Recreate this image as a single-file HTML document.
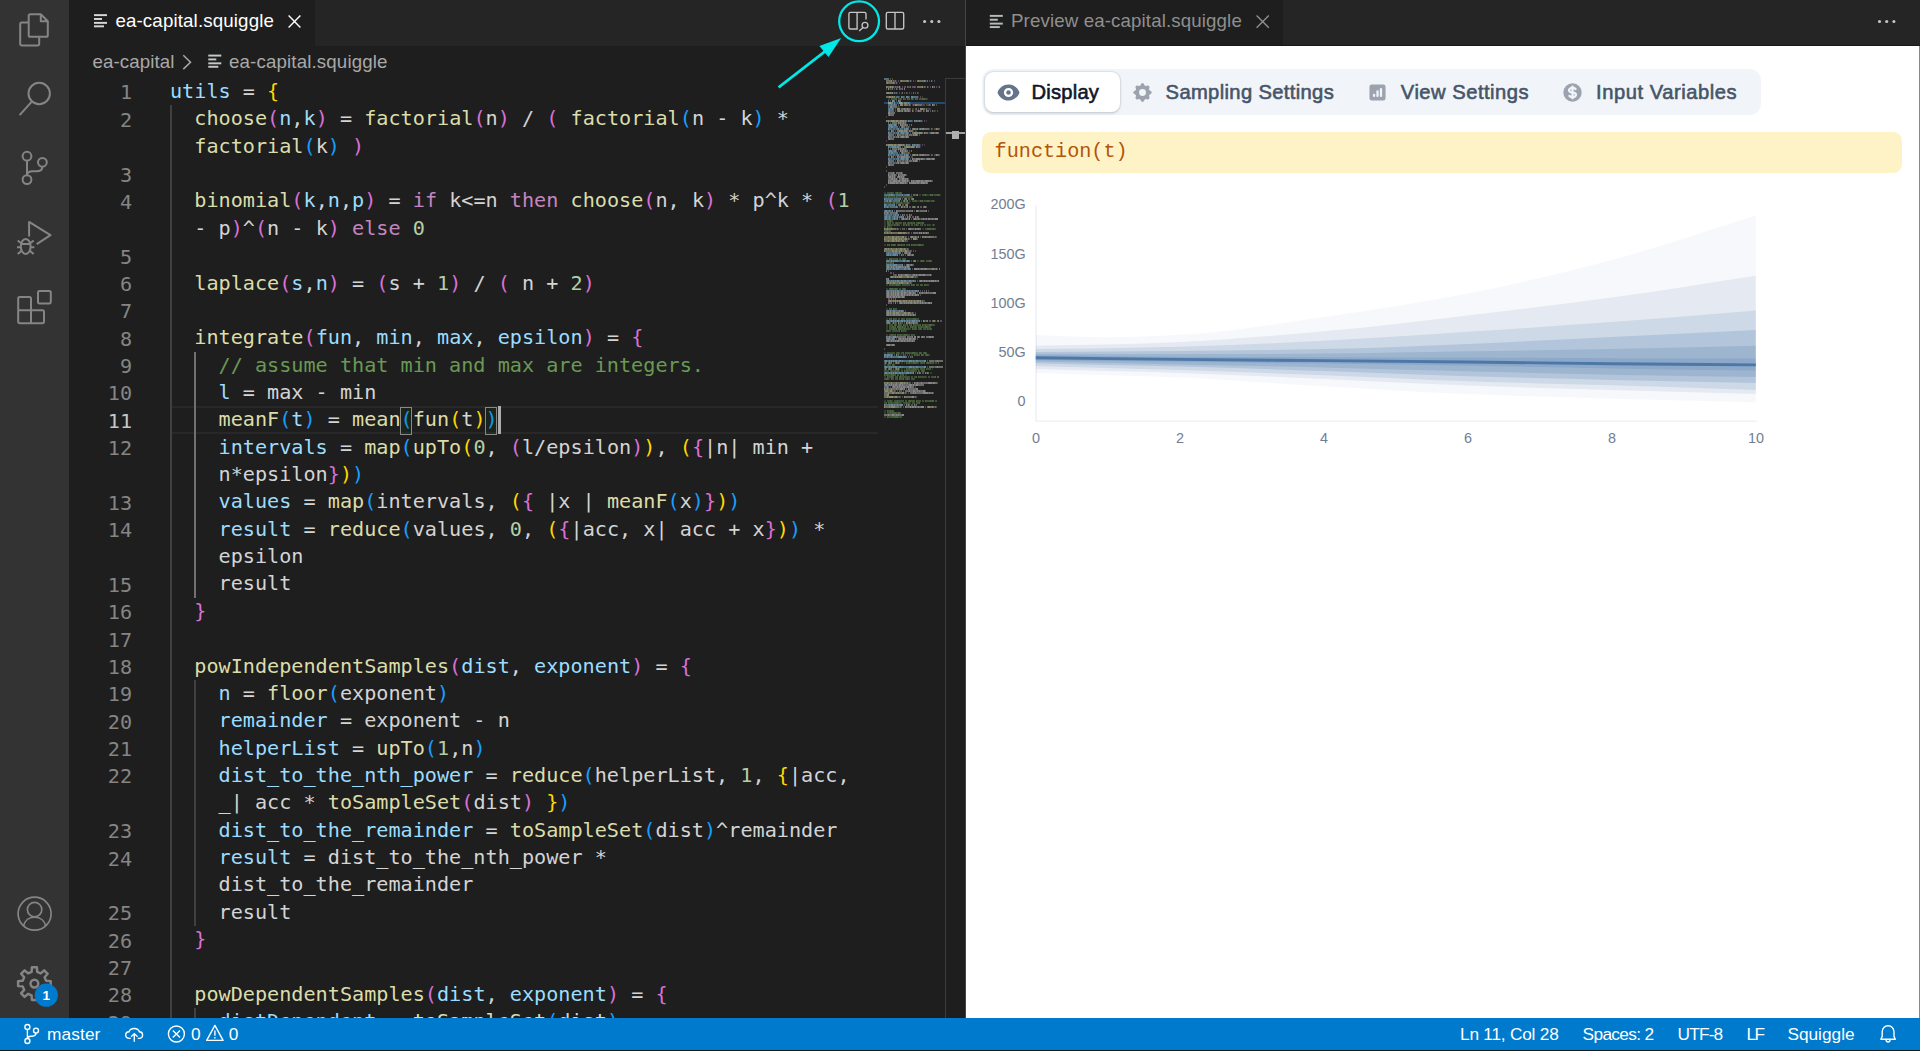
<!DOCTYPE html>
<html lang="en"><head><meta charset="utf-8"><title>ea-capital.squiggle - Visual Studio Code</title>
<style>
html,body{margin:0;padding:0}
body{width:1920px;height:1051px;overflow:hidden;position:relative;background:#1e1e1e;font-family:"Liberation Sans","DejaVu Sans",sans-serif;color:#ccc}
.abs{position:absolute}
div,span{box-sizing:border-box}
/* activity bar */
#act{position:absolute;left:0;top:0;width:69.1px;height:1018px;background:#333333}
/* editor group 1 */
#tabs1{position:absolute;left:69.1px;top:0;width:896.4px;height:46px;background:#252526}
#tab1{position:absolute;left:0;top:0;width:245.8px;height:46px;background:#1e1e1e}
.tablabel{position:absolute;font-size:18.72px;line-height:24px;white-space:nowrap}
#crumbs{position:absolute;left:69.1px;top:46px;width:896.4px;height:31.5px;background:#1e1e1e}
.crumb{position:absolute;font-size:18.72px;line-height:24px;white-space:nowrap;color:#a9a9a9}
/* code */
#ed{position:absolute;left:69.1px;top:0;width:896.4px;height:1018px;overflow:hidden;pointer-events:none}
.row,.ln{position:absolute;font-family:"DejaVu Sans Mono","Liberation Mono",monospace;font-size:20.16px;line-height:27.36px;height:27.36px;white-space:pre}
.row{left:100.9px;color:#d4d4d4}
.ln{left:0;width:63px;text-align:right;color:#858585}
.ln.cur{color:#c6c6c6}
.v{color:#9CDCFE}.f{color:#DCDCAA}.d{color:#D4D4D4}.k{color:#C586C0}.n{color:#B5CEA8}.c{color:#6A9955}
.b1{color:#FFD700}.b2{color:#DA70D6}.b3{color:#179FFF}
.bm{position:relative}.bm::before{content:"";position:absolute;left:-1px;top:0;width:12.1px;height:27.36px;border:1.3px solid #888;background:rgba(0,100,0,.1);box-sizing:border-box}
.cursor{display:inline-block;width:2.7px;height:27.36px;background:#aeafad;vertical-align:top;margin-left:.4px}
.guide{position:absolute;width:1.44px;background:#404040}
.guide.act{background:#707070}
#curline{position:absolute;left:171.5px;width:706px;height:27.36px;border-top:2.88px solid #282828;border-bottom:2.88px solid #282828}
/* overview ruler */
#ruler{position:absolute;left:945.2px;top:78.2px;width:20.2px;height:940px;border-left:1.2px solid #3c3c3c;border-top:1.2px solid #3c3c3c}
/* group 2 */
#sep{position:absolute;left:965.2px;top:0;width:1.2px;height:1018px;background:#444}
#tabs2{position:absolute;left:966.3px;top:0;width:953.7px;height:46.4px;background:#252526;border-bottom:1.2px solid #181818}
#tab2{position:absolute;left:0;top:0;width:316.6px;height:45.2px;background:#1e1e1e}
#web{position:absolute;left:966.3px;top:46.4px;width:953.7px;height:971.6px;background:#fff}
#pills{position:absolute;left:982.2px;top:68.8px;width:778.4px;height:45.8px;border-radius:11.5px;background:#f1f5f9}
#pill1{position:absolute;left:984.9px;top:71.6px;width:135.2px;height:40.3px;border-radius:8.6px;background:#fff;box-shadow:0 1.4px 3px rgba(0,0,0,.09),0 0 0 1.3px rgba(203,213,225,.5)}
.pl{position:absolute;top:80px;font-size:20.16px;line-height:24px;white-space:nowrap;color:#475569;-webkit-text-stroke:0.6px #475569}
#banner{position:absolute;left:982.2px;top:132.3px;width:920px;height:40.5px;border-radius:8.6px;background:#fef3c7}
#fn{position:absolute;left:994.6px;top:139.5px;font-family:"Liberation Mono",monospace;font-size:20.16px;line-height:24px;color:#b45309;white-space:pre}
/* status */
#status{position:absolute;left:0;top:1017.8px;width:1920px;height:32.1px;background:#007acc}
#botline{position:absolute;left:0;top:1049.8px;width:1920px;height:1.2px;background:#1a1a1a}
#redge{position:absolute;left:1918.9px;top:46.4px;width:1.1px;height:972px;background:#8a8a8a}
.st{position:absolute;top:1022.6px;font-size:17.28px;line-height:22px;color:#fff;white-space:nowrap}

</style></head>
<body>
<div id="act"></div>
<svg class="abs" style="left:0;top:0" width="69" height="1018" viewBox="0 0 69 1018"><path fill="none" stroke="#858585" stroke-width="2" stroke-linejoin="round" stroke-linecap="butt" d="M40.8,14.3H30.3a1.6,1.6 0 0 0 -1.6,1.6V35.2a1.6,1.6 0 0 0 1.6,1.6H46.2a1.6,1.6 0 0 0 1.6,-1.6V21.3ZM40.8,14.3V21.3H47.8"/><path fill="none" stroke="#858585" stroke-width="2" stroke-linejoin="round" stroke-linecap="butt" d="M28.2,22.6H21.8a1.6,1.6 0 0 0 -1.6,1.6V44a1.6,1.6 0 0 0 1.6,1.6H37.6a1.6,1.6 0 0 0 1.6,-1.6V37.2"/><circle fill="none" stroke="#858585" stroke-width="2" stroke-linejoin="round" stroke-linecap="butt" cx="39.2" cy="93.5" r="10.7"/><path fill="none" stroke="#858585" stroke-width="2" stroke-linejoin="round" stroke-linecap="butt" d="M31.8,101.6L19.6,115.2"/><circle fill="none" stroke="#858585" stroke-width="2" stroke-linejoin="round" stroke-linecap="butt" cx="27" cy="156.2" r="4.4"/><circle fill="none" stroke="#858585" stroke-width="2" stroke-linejoin="round" stroke-linecap="butt" cx="27" cy="179.6" r="4.4"/><circle fill="none" stroke="#858585" stroke-width="2" stroke-linejoin="round" stroke-linecap="butt" cx="42.4" cy="162.3" r="4.4"/><path fill="none" stroke="#858585" stroke-width="2" stroke-linejoin="round" stroke-linecap="butt" d="M27,160.6V175.2M42.4,166.7C42.4,170.4 39.5,171.3 36.5,171.3H33C29.5,171.3 27,172.6 27,175.2"/><path fill="none" stroke="#858585" stroke-width="2" stroke-linejoin="round" stroke-linecap="butt" stroke-linejoin="miter" d="M29.1,236.4V221.9L50.5,235.2L36.7,244.2"/><ellipse fill="none" stroke="#858585" stroke-width="2" stroke-linejoin="round" stroke-linecap="butt" cx="25.7" cy="246.4" rx="4.9" ry="7.5"/><path fill="none" stroke="#858585" stroke-width="2" stroke-linejoin="round" stroke-linecap="butt" stroke-width="1.8" d="M21.3,243.9H30.1M21.2,243.2L17.7,240.5M20.6,247.3H17M21.3,250.9L17.7,254.1M30.2,243.2L33.7,240.5M30.8,247.3H34.4M30.1,250.9L33.7,254.1"/><path fill="none" stroke="#858585" stroke-width="2" stroke-linejoin="round" stroke-linecap="butt" d="M31,310.2V298.6a1.6,1.6 0 0 0 -1.6,-1.6H19.8a1.6,1.6 0 0 0 -1.6,1.6V321.6a1.6,1.6 0 0 0 1.6,1.6H42.4a1.6,1.6 0 0 0 1.6,-1.6V311.8a1.6,1.6 0 0 0 -1.6,-1.6H18.2M31,310.2V323.2"/><rect fill="none" stroke="#858585" stroke-width="2" stroke-linejoin="round" stroke-linecap="butt" x="38" y="291" width="12.8" height="12.4" rx="1.6"/><circle fill="none" stroke="#858585" stroke-width="1.7" cx="34.6" cy="913.7" r="16.5"/><circle fill="none" stroke="#858585" stroke-width="1.7" cx="34.6" cy="909.6" r="7.2"/><path fill="none" stroke="#858585" stroke-width="1.7" d="M23.6,926C24.6,920.6 29,917.2 34.6,917.2C40.2,917.2 44.6,920.6 45.6,926"/><path fill="none" stroke="#858585" stroke-width="2.45" stroke-linejoin="round" d="M31.6,971.9L31.9,967.3L36.9,967.3L37.2,971.9L40.7,973.4L44.2,970.3L47.7,973.8L44.6,977.3L46.1,980.8L50.7,981.1L50.7,986.1L46.1,986.4L44.6,989.9L47.7,993.4L44.2,996.9L40.7,993.8L37.2,995.3L36.9,999.9L31.9,999.9L31.6,995.3L28.1,993.8L24.6,996.9L21.1,993.4L24.2,989.9L22.7,986.4L18.1,986.1L18.1,981.1L22.7,980.8L24.2,977.3L21.1,973.8L24.6,970.3L28.1,973.4Z"/><circle fill="none" stroke="#858585" stroke-width="2.45" cx="34.4" cy="983.6" r="3.9"/><circle cx="46.3" cy="995.2" r="11.6" fill="#007acc"/><text x="46.3" y="1000.2" text-anchor="middle" font-family="'Liberation Sans',sans-serif" font-weight="bold" font-size="13.5" fill="#fff">1</text></svg>
<div id="tabs1"><div id="tab1"></div></div>
<div id="crumbs"></div>
<div class="tablabel" style="left:115.4px;top:9.2px;color:#fff;letter-spacing:.14px">ea-capital.squiggle</div>
<div class="crumb" style="left:92.4px;top:49.6px;letter-spacing:.1px">ea-capital</div>
<div class="crumb" style="left:229px;top:49.6px;letter-spacing:.14px">ea-capital.squiggle</div>
<div id="curline" style="top:406.3px"></div>
<div id="ed">

<div class="ln" style="top:79.46px">1</div>
<div class="row" style="top:78.00px"><span class="v">utils</span><span class="d"> = </span><span class="b1">{</span></div>
<div class="ln" style="top:106.82px">2</div>
<div class="row" style="top:105.36px"><span class="d">  </span><span class="f">choose</span><span class="b2">(</span><span class="v">n</span><span class="d">,</span><span class="v">k</span><span class="b2">)</span><span class="d"> = </span><span class="f">factorial</span><span class="b2">(</span><span class="d">n</span><span class="b2">)</span><span class="d"> / </span><span class="b2">(</span><span class="d"> </span><span class="f">factorial</span><span class="b3">(</span><span class="d">n - k</span><span class="b3">)</span><span class="d"> *</span></div>
<div class="row" style="top:132.72px"><span class="d">  </span><span class="f">factorial</span><span class="b3">(</span><span class="d">k</span><span class="b3">)</span><span class="d"> </span><span class="b2">)</span></div>
<div class="ln" style="top:161.54px">3</div>
<div class="ln" style="top:188.90px">4</div>
<div class="row" style="top:187.44px"><span class="d">  </span><span class="f">binomial</span><span class="b2">(</span><span class="v">k</span><span class="d">,</span><span class="v">n</span><span class="d">,</span><span class="v">p</span><span class="b2">)</span><span class="d"> = </span><span class="k">if</span><span class="d"> k&lt;=n </span><span class="k">then</span><span class="d"> </span><span class="f">choose</span><span class="b2">(</span><span class="d">n, k</span><span class="b2">)</span><span class="d"> * p^k * </span><span class="b2">(</span><span class="n">1</span></div>
<div class="row" style="top:214.80px"><span class="d">  - p</span><span class="b2">)</span><span class="d">^</span><span class="b2">(</span><span class="d">n - k</span><span class="b2">)</span><span class="d"> </span><span class="k">else</span><span class="d"> </span><span class="n">0</span></div>
<div class="ln" style="top:243.62px">5</div>
<div class="ln" style="top:270.98px">6</div>
<div class="row" style="top:269.52px"><span class="d">  </span><span class="f">laplace</span><span class="b2">(</span><span class="v">s</span><span class="d">,</span><span class="v">n</span><span class="b2">)</span><span class="d"> = </span><span class="b2">(</span><span class="d">s + </span><span class="n">1</span><span class="b2">)</span><span class="d"> / </span><span class="b2">(</span><span class="d"> n + </span><span class="n">2</span><span class="b2">)</span></div>
<div class="ln" style="top:298.34px">7</div>
<div class="ln" style="top:325.70px">8</div>
<div class="row" style="top:324.24px"><span class="d">  </span><span class="f">integrate</span><span class="b2">(</span><span class="v">fun</span><span class="d">, </span><span class="v">min</span><span class="d">, </span><span class="v">max</span><span class="d">, </span><span class="v">epsilon</span><span class="b2">)</span><span class="d"> = </span><span class="b2">{</span></div>
<div class="ln" style="top:353.06px">9</div>
<div class="row" style="top:351.60px"><span class="d">    </span><span class="c">// assume that min and max are integers.</span></div>
<div class="ln" style="top:380.42px">10</div>
<div class="row" style="top:378.96px"><span class="d">    </span><span class="v">l</span><span class="d"> = max - min</span></div>
<div class="ln cur" style="top:407.78px">11</div>
<div class="row" style="top:406.32px"><span class="d">    </span><span class="f">meanF</span><span class="b3">(</span><span class="v">t</span><span class="b3">)</span><span class="d"> = </span><span class="f">mean</span><span class="b3 bm">(</span><span class="f">fun</span><span class="b1">(</span><span class="d">t</span><span class="b1">)</span><span class="b3 bm">)</span><span class="cursor"></span></div>
<div class="ln" style="top:435.14px">12</div>
<div class="row" style="top:433.68px"><span class="d">    </span><span class="v">intervals</span><span class="d"> = </span><span class="f">map</span><span class="b3">(</span><span class="f">upTo</span><span class="b1">(</span><span class="n">0</span><span class="d">, </span><span class="b2">(</span><span class="d">l/epsilon</span><span class="b2">)</span><span class="b1">)</span><span class="d">, </span><span class="b1">(</span><span class="b2">{</span><span class="d">|n| min +</span></div>
<div class="row" style="top:461.04px"><span class="d">    n*epsilon</span><span class="b2">}</span><span class="b1">)</span><span class="b3">)</span></div>
<div class="ln" style="top:489.86px">13</div>
<div class="row" style="top:488.40px"><span class="d">    </span><span class="v">values</span><span class="d"> = </span><span class="f">map</span><span class="b3">(</span><span class="d">intervals, </span><span class="b1">(</span><span class="b2">{</span><span class="d"> |x | </span><span class="f">meanF</span><span class="b3">(</span><span class="d">x</span><span class="b3">)</span><span class="b2">}</span><span class="b1">)</span><span class="b3">)</span></div>
<div class="ln" style="top:517.22px">14</div>
<div class="row" style="top:515.76px"><span class="d">    </span><span class="v">result</span><span class="d"> = </span><span class="f">reduce</span><span class="b3">(</span><span class="d">values, </span><span class="n">0</span><span class="d">, </span><span class="b1">(</span><span class="b2">{</span><span class="d">|acc, x| acc + x</span><span class="b2">}</span><span class="b1">)</span><span class="b3">)</span><span class="d"> *</span></div>
<div class="row" style="top:543.12px"><span class="d">    epsilon</span></div>
<div class="ln" style="top:571.94px">15</div>
<div class="row" style="top:570.48px"><span class="d">    result</span></div>
<div class="ln" style="top:599.30px">16</div>
<div class="row" style="top:597.84px"><span class="d">  </span><span class="b2">}</span></div>
<div class="ln" style="top:626.66px">17</div>
<div class="ln" style="top:654.02px">18</div>
<div class="row" style="top:652.56px"><span class="d">  </span><span class="f">powIndependentSamples</span><span class="b2">(</span><span class="v">dist</span><span class="d">, </span><span class="v">exponent</span><span class="b2">)</span><span class="d"> = </span><span class="b2">{</span></div>
<div class="ln" style="top:681.38px">19</div>
<div class="row" style="top:679.92px"><span class="d">    </span><span class="v">n</span><span class="d"> = </span><span class="f">floor</span><span class="b3">(</span><span class="d">exponent</span><span class="b3">)</span></div>
<div class="ln" style="top:708.74px">20</div>
<div class="row" style="top:707.28px"><span class="d">    </span><span class="v">remainder</span><span class="d"> = exponent - n</span></div>
<div class="ln" style="top:736.10px">21</div>
<div class="row" style="top:734.64px"><span class="d">    </span><span class="v">helperList</span><span class="d"> = </span><span class="f">upTo</span><span class="b3">(</span><span class="n">1</span><span class="d">,n</span><span class="b3">)</span></div>
<div class="ln" style="top:763.46px">22</div>
<div class="row" style="top:762.00px"><span class="d">    </span><span class="v">dist_to_the_nth_power</span><span class="d"> = </span><span class="f">reduce</span><span class="b3">(</span><span class="d">helperList, </span><span class="n">1</span><span class="d">, </span><span class="b1">{</span><span class="d">|acc,</span></div>
<div class="row" style="top:789.36px"><span class="d">    _| acc * </span><span class="f">toSampleSet</span><span class="b2">(</span><span class="d">dist</span><span class="b2">)</span><span class="d"> </span><span class="b1">}</span><span class="b3">)</span></div>
<div class="ln" style="top:818.18px">23</div>
<div class="row" style="top:816.72px"><span class="d">    </span><span class="v">dist_to_the_remainder</span><span class="d"> = </span><span class="f">toSampleSet</span><span class="b3">(</span><span class="d">dist</span><span class="b3">)</span><span class="d">^remainder</span></div>
<div class="ln" style="top:845.54px">24</div>
<div class="row" style="top:844.08px"><span class="d">    </span><span class="v">result</span><span class="d"> = dist_to_the_nth_power *</span></div>
<div class="row" style="top:871.44px"><span class="d">    dist_to_the_remainder</span></div>
<div class="ln" style="top:900.26px">25</div>
<div class="row" style="top:898.80px"><span class="d">    result</span></div>
<div class="ln" style="top:927.62px">26</div>
<div class="row" style="top:926.16px"><span class="d">  </span><span class="b2">}</span></div>
<div class="ln" style="top:954.98px">27</div>
<div class="ln" style="top:982.34px">28</div>
<div class="row" style="top:980.88px"><span class="d">  </span><span class="f">powDependentSamples</span><span class="b2">(</span><span class="v">dist</span><span class="d">, </span><span class="v">exponent</span><span class="b2">)</span><span class="d"> = </span><span class="b2">{</span></div>
<div class="ln" style="top:1009.70px">29</div>
<div class="row" style="top:1008.24px"><span class="d">    </span><span class="v">distDependent</span><span class="d"> = </span><span class="f">toSampleSet</span><span class="b3">(</span><span class="d">dist</span><span class="b3">)</span></div>
</div>
<div class="guide" style="left:170.35px;top:105.36px;height:957.60px"></div>
<div class="guide act" style="left:194.17px;top:351.60px;height:246.24px"></div>
<div class="guide" style="left:194.17px;top:679.92px;height:246.24px"></div>
<div class="guide" style="left:194.17px;top:1008.24px;height:54.72px"></div>
<svg class="abs" style="left:883.7px;top:78.2px" width="63" height="342" viewBox="0 0 63 342" shape-rendering="crispEdges">
<rect x="0" y="24" width="62" height="2" fill="#264f78" opacity="0.9"/>
<path d="M8 1h1M23 25h1M25 25h1M24 27h1M39 27h1M42 27h1M14 29h1M28 31h1M45 31h1M31 33h1M50 33h1M50 51h1M31 53h1" stroke="#FFD700" stroke-width="1.15" opacity="0.26" fill="none"/>
<path d="M8 3h1M12 3h1M25 3h1M27 3h1M31 3h1M15 5h1M10 9h1M16 9h1M39 9h1M44 9h1M54 9h1M5 11h1M7 11h1M13 11h1M9 15h1M13 15h1M17 15h1M23 15h1M27 15h1M34 15h1M11 19h1M34 19h1M38 19h1M28 27h1M38 27h1M43 27h1M13 29h1M29 31h1M44 31h1M32 33h1M49 33h1M2 39h1M23 43h1M38 43h1M42 43h1M24 53h1M29 53h1M2 63h1M21 67h1M36 67h1M40 67h1" stroke="#DA70D6" stroke-width="1.15" opacity="0.26" fill="none"/>
<path d="M42 3h1M48 3h1M11 5h1M13 5h1M9 25h1M11 25h1M19 25h1M26 25h1M19 27h1M15 29h1M16 31h1M41 31h1M43 31h1M46 31h1M19 33h1M51 33h1M13 45h1M22 45h1M21 49h1M25 49h1M34 51h1M32 53h1M39 55h1M44 55h1M31 69h1M36 69h1" stroke="#179FFF" stroke-width="1.15" opacity="0.26" fill="none"/>
<path d="M4 21h2M43 21h1M0 115h2M35 117h2M43 117h3M49 117h1M56 117h1M3 119h1M11 119h1M18 119h1M28 119h1M25 123h2M33 123h3M39 123h1M46 123h1M50 123h1M7 125h1M11 125h1M19 125h1M25 125h1M0 143h2M0 145h2M0 147h2M9 147h1M17 147h1M21 147h1M23 147h1M31 147h1M34 147h1M37 147h1M44 147h1M46 147h1M48 147h1M50 147h1M1 149h1M4 149h1M6 149h2M38 151h2M0 167h2M2 181h2M33 183h2M40 183h1M2 207h2M2 211h2M2 231h2M2 241h2M2 247h2M2 249h2M2 251h2M26 251h1M42 251h1M22 253h1M2 257h2M0 275h2M16 277h2M20 277h1M23 277h1M27 277h2M45 277h1M17 285h2M20 285h1M17 291h2M20 291h1M48 291h1M15 293h1M46 295h2M17 297h1M21 297h2M0 299h2M42 299h1M5 301h1M30 301h1M0 323h2M8 323h1M17 325h1M26 325h1M0 333h2M0 335h2M0 339h2" stroke="#6A9955" stroke-width="1.15" opacity="0.26" fill="none"/>
<path d="M8 21h3M14 21h2M17 21h1M20 21h2M24 21h1M29 21h1M32 21h1M35 21h3M41 21h2M3 115h4M8 115h2M11 115h1M14 115h2M17 115h1M38 117h3M42 117h1M50 117h3M55 117h1M0 119h2M5 119h5M13 119h5M20 119h8M28 123h3M32 123h1M40 123h3M45 123h1M47 123h2M1 125h5M8 125h1M14 125h2M18 125h1M20 125h3M4 143h2M7 143h2M5 145h1M8 145h2M11 145h1M13 145h5M20 145h1M23 145h1M25 145h2M28 145h2M32 145h2M36 145h2M3 147h1M6 147h3M11 147h2M14 147h2M20 147h1M25 147h1M27 147h2M30 147h1M33 147h1M36 147h1M40 147h2M43 147h1M45 147h1M0 149h1M5 149h1M41 151h2M47 151h1M50 151h2M0 153h1M4 153h1M6 153h1M4 167h1M8 167h1M11 167h1M13 167h1M16 167h1M18 167h2M22 167h3M28 167h2M31 167h3M37 167h3M8 181h5M15 181h2M18 181h1M21 181h1M36 183h1M42 183h3M47 183h1M3 185h3M8 185h1M6 207h2M9 207h3M15 207h2M18 207h8M28 207h1M30 207h1M32 207h3M36 207h1M38 207h1M41 207h4M9 211h2M13 211h1M15 211h2M18 211h1M21 211h1M6 231h1M10 231h3M6 241h1M10 241h3M14 241h2M17 241h1M19 241h2M23 241h2M26 241h3M32 241h3M5 247h4M12 247h1M16 247h2M20 247h3M25 247h2M30 247h6M39 247h2M42 247h3M48 247h3M5 249h3M10 249h1M17 249h1M19 249h2M23 249h2M27 249h1M29 249h2M32 249h1M35 249h2M38 249h3M44 249h3M5 251h4M11 251h1M17 251h3M21 251h5M29 251h2M32 251h1M34 251h2M37 251h1M39 251h3M44 251h2M47 251h1M2 253h1M5 253h2M8 253h7M18 253h4M5 257h2M9 257h2M14 257h2M17 257h3M23 257h3M28 257h3M3 275h8M12 275h2M15 275h1M17 275h2M22 275h2M25 275h3M31 275h3M37 275h1M39 275h1M42 275h1M21 277h1M25 277h1M31 277h2M34 277h2M39 277h1M41 277h1M44 277h1M23 285h2M26 285h3M32 285h3M36 285h1M38 285h2M42 285h1M45 285h1M47 285h2M51 285h2M0 287h2M3 287h1M5 287h2M10 287h1M23 291h2M26 291h3M32 291h3M36 291h1M38 291h2M42 291h5M0 293h5M6 293h1M8 293h3M12 293h1M17 293h2M21 293h2M24 293h3M30 293h3M35 293h1M37 293h1M40 293h1M1 297h2M4 297h3M10 297h2M14 297h1M18 297h1M4 299h3M9 299h1M11 299h2M15 299h1M17 299h9M27 299h2M30 299h2M35 299h7M44 299h2M47 299h4M0 301h2M4 301h1M8 301h2M11 301h3M16 301h3M21 301h2M24 301h2M27 301h2M3 323h3M7 323h1M10 323h3M14 323h6M21 323h2M24 323h1M27 323h2M30 323h1M33 323h4M38 323h2M42 323h4M47 323h1M51 323h2M0 325h2M5 325h2M8 325h3M14 325h3M19 325h3M23 325h3M28 325h3M32 325h3M4 333h2M7 333h1M9 333h1M3 335h3M7 335h1M12 335h2M16 335h1M4 339h4M9 339h1M14 339h4" stroke="#6A9955" stroke-width="1.15" opacity="0.42" fill="none"/>
<path d="M7 21h1M11 21h2M16 21h1M19 21h1M23 21h1M25 21h1M27 21h2M31 21h1M33 21h1M38 21h3M7 115h1M12 115h2M16 115h1M41 117h1M46 117h3M53 117h2M2 119h1M4 119h1M10 119h1M12 119h1M19 119h1M31 123h1M36 123h3M43 123h2M49 123h1M0 125h1M6 125h1M9 125h2M12 125h2M16 125h2M23 125h2M3 143h1M6 143h1M3 145h2M6 145h1M12 145h1M19 145h1M21 145h1M24 145h1M27 145h1M30 145h1M34 145h2M38 145h2M4 147h2M10 147h1M13 147h1M19 147h1M22 147h1M24 147h1M32 147h1M38 147h1M49 147h1M3 149h1M43 151h4M48 151h2M1 153h3M5 153h1M3 167h1M5 167h1M7 167h1M9 167h2M14 167h2M17 167h1M20 167h1M25 167h1M27 167h1M30 167h1M34 167h3M5 181h3M13 181h1M19 181h2M37 183h3M45 183h2M2 185h1M6 185h2M9 185h1M5 207h1M8 207h1M12 207h3M27 207h1M29 207h1M37 207h1M40 207h1M5 211h4M11 211h2M19 211h2M5 231h1M7 231h1M9 231h1M5 241h1M7 241h1M9 241h1M18 241h1M22 241h1M25 241h1M29 241h3M10 247h2M14 247h2M19 247h1M23 247h1M27 247h1M29 247h1M36 247h1M38 247h1M41 247h1M45 247h3M8 249h2M11 249h1M13 249h4M18 249h1M21 249h1M26 249h1M28 249h1M31 249h1M34 249h1M37 249h1M41 249h3M9 251h2M12 251h1M14 251h3M20 251h1M28 251h1M31 251h1M36 251h1M43 251h1M46 251h1M3 253h2M15 253h1M17 253h1M7 257h2M11 257h1M13 257h1M16 257h1M20 257h3M27 257h1M14 275h1M19 275h1M21 275h1M24 275h1M28 275h3M35 275h2M40 275h2M19 277h1M30 277h1M33 277h1M37 277h2M42 277h2M22 285h1M25 285h1M29 285h3M37 285h1M40 285h1M43 285h2M46 285h1M49 285h1M54 285h1M4 287h1M8 287h2M22 291h1M25 291h1M29 291h3M37 291h1M40 291h1M7 293h1M11 293h1M13 293h2M20 293h1M23 293h1M27 293h3M34 293h1M38 293h2M0 297h1M3 297h1M7 297h3M13 297h1M16 297h1M19 297h1M3 299h1M7 299h2M13 299h1M16 299h1M32 299h1M34 299h1M51 299h1M53 299h2M2 301h2M7 301h1M15 301h1M19 301h1M23 301h1M29 301h1M6 323h1M13 323h1M25 323h2M29 323h1M32 323h1M41 323h1M46 323h1M48 323h2M2 325h1M4 325h1M7 325h1M11 325h3M22 325h1M35 325h1M3 333h1M6 333h1M8 333h1M6 335h1M8 335h4M14 335h2M3 339h1M8 339h1M10 339h4" stroke="#6A9955" stroke-width="1.15" opacity="0.56" fill="none"/>
<path d="M6 1h1M10 3h1M14 3h1M29 3h1M45 3h1M50 3h1M12 9h1M14 9h1M18 9h1M24 9h2M41 9h1M46 9h1M49 9h1M52 9h1M2 11h1M6 11h1M10 11h1M11 15h1M15 15h1M20 15h1M25 15h1M31 15h1M15 19h1M20 19h1M25 19h1M36 19h1M6 23h1M12 23h1M13 25h1M14 27h1M26 27h1M30 27h1M40 27h1M44 27h1M46 27h1M52 27h1M5 29h1M11 31h1M26 31h1M31 31h1M34 31h1M11 33h1M26 33h1M29 33h1M33 33h1M37 33h1M40 33h1M46 33h1M53 33h1M28 43h1M40 43h1M6 45h1M14 47h1M25 47h1M15 49h1M23 49h1M26 51h1M45 51h1M48 51h1M51 51h1M55 51h1M4 53h2M11 53h1M26 55h1M45 55h1M11 57h1M17 57h1M20 57h1M24 57h1M28 57h1M35 57h1M8 59h1M11 59h1M15 59h1M26 67h1M38 67h1M18 69h1M6 71h1M13 71h1M22 71h1M14 73h1M25 73h1M15 75h1M21 75h1M23 75h1M25 75h1M26 77h1M34 77h1M45 77h1M48 77h1M50 77h2M55 77h1M4 79h2M11 79h1M27 79h2M26 81h1M41 81h1M11 83h1M17 83h1M20 83h1M24 83h1M28 83h1M35 83h1M8 85h1M11 85h1M15 85h1M2 89h1M2 93h1M10 95h1M18 95h1M12 97h1M22 97h1M11 99h1M20 99h1M13 101h1M24 101h1M25 103h1M48 103h1M23 105h1M2 107h1M0 109h1M27 117h1M18 121h1M17 123h1M12 127h1M15 129h1M19 129h1M31 129h1M42 129h1M10 133h1M21 133h1M30 133h1M35 133h1M44 133h1M5 135h1M16 137h1M21 139h1M15 141h1M24 141h1M27 141h1M36 141h1M43 141h1M12 151h1M14 151h1M16 151h1M22 151h1M30 151h1M23 155h1M25 155h1M27 155h1M34 155h1M38 155h1M20 159h1M22 159h1M24 159h1M33 159h1M36 159h1M50 159h1M52 159h1M23 161h1M25 161h1M27 161h1M33 161h1M20 163h1M22 163h2M22 171h1M24 171h1M25 173h1M27 173h1M29 173h1M31 173h1M18 175h1M15 177h1M21 177h1M27 183h1M20 187h1M29 187h1M28 191h1M53 191h1M4 193h1M9 195h1M27 197h1M47 197h1M30 199h1M32 199h2M33 203h1M25 205h1M27 205h1M36 213h1M38 213h1M40 213h1M44 213h1M33 215h1M36 217h1M9 221h1M37 223h1M39 223h2M9 225h1M13 225h1M2 227h1M21 233h1M27 235h1M29 235h1M31 235h1M37 243h1M41 243h1M51 243h1M6 245h1M8 245h1M12 245h1M17 245h2M20 245h1M12 261h1M33 261h1M0 271h1M10 277h1M24 279h1M43 283h1M50 283h1M0 285h1M2 285h1M9 285h1M15 285h1M43 289h1M50 289h1M0 291h1M2 291h1M9 291h1M15 291h1M31 295h1M24 305h1M26 305h1M28 305h1M53 305h1M6 309h1M31 309h1M22 311h1M9 313h1M11 313h1M13 313h1M19 313h1M41 313h1M20 315h1M22 315h1M24 315h1M49 315h1M14 319h1M16 319h1M18 319h1M30 319h1M32 319h1M20 327h1M15 329h1M17 329h1M19 329h1M41 329h1M50 329h1M52 329h1" stroke="#D4D4D4" stroke-width="1.15" opacity="0.26" fill="none"/>
<path d="M26 3h1M43 3h1M47 3h1M12 5h1M23 9h1M26 9h1M40 9h1M43 9h1M50 9h1M8 11h1M12 11h1M18 15h1M29 15h1M10 23h1M15 23h2M24 25h1M29 27h1M33 27h5M45 27h1M49 27h2M4 29h1M8 29h5M17 31h3M21 31h2M24 31h2M32 31h1M42 31h1M20 33h1M22 33h2M25 33h1M35 33h2M39 33h1M43 33h2M48 33h1M6 35h5M4 37h1M6 37h4M15 45h1M17 45h2M20 45h2M17 47h1M19 47h2M22 47h2M27 47h1M24 49h1M35 51h1M37 51h1M40 51h5M53 51h2M8 53h2M26 53h3M41 55h3M46 55h1M50 55h2M54 55h1M14 57h3M18 57h2M21 57h2M25 57h3M30 57h1M33 57h1M5 59h3M9 59h2M12 59h2M16 59h1M20 59h2M24 59h1M4 61h1M6 61h4M33 69h3M15 71h1M17 71h2M20 71h2M17 73h1M19 73h2M22 73h2M27 73h1M24 75h1M35 77h1M37 77h1M40 77h5M53 77h2M8 79h2M14 79h3M21 79h1M24 79h2M29 81h3M36 81h1M39 81h2M42 81h1M46 81h2M50 81h1M14 83h3M18 83h2M21 83h2M25 83h3M30 83h1M33 83h1M5 85h3M9 85h2M12 85h2M16 85h1M20 85h2M24 85h1M4 87h1M6 87h4M4 95h5M12 95h5M5 97h3M9 97h1M11 97h1M15 97h3M19 97h1M21 97h1M4 99h1M7 99h1M9 99h1M13 99h1M16 99h1M18 99h1M4 101h3M9 101h1M11 101h1M15 101h3M20 101h1M22 101h1M5 103h1M7 103h2M13 103h1M16 103h2M22 103h1M24 103h1M28 103h1M30 103h2M36 103h1M39 103h2M45 103h1M47 103h1M5 105h1M11 105h1M14 105h2M20 105h1M22 105h1M26 105h1M32 105h1M35 105h2M41 105h1M43 105h1M13 133h8M22 133h6M34 133h1M36 133h6M1 135h2M4 135h1M6 135h6M13 135h1M17 141h1M20 141h2M23 141h1M29 141h1M32 141h2M35 141h1M37 141h2M40 141h2M46 141h2M49 141h2M13 151h1M24 151h1M27 151h3M32 151h2M35 151h2M24 155h1M29 155h5M36 155h1M40 155h2M43 155h2M21 159h1M26 159h1M29 159h2M32 159h1M51 159h1M24 161h1M21 163h1M23 171h1M26 173h1M20 175h1M23 175h2M26 175h1M23 177h1M26 177h2M29 177h1M22 187h1M25 187h2M28 187h1M2 189h1M5 189h2M8 189h1M10 189h2M13 189h1M17 189h1M19 189h2M22 189h1M25 189h1M33 191h1M35 191h2M39 191h1M43 191h5M50 191h2M15 197h2M18 197h3M24 197h3M28 197h1M31 197h1M33 197h2M37 197h1M41 197h5M31 199h1M3 201h1M35 203h1M38 203h2M41 203h1M43 203h2M46 203h1M50 203h1M52 203h2M26 205h1M42 213h1M2 215h1M5 215h2M8 215h1M10 215h1M12 215h1M15 215h2M19 215h1M22 215h3M27 215h2M30 215h2M36 215h2M39 215h3M43 215h6M2 217h1M5 217h2M8 217h1M10 217h1M12 217h1M15 217h2M19 217h1M21 217h2M24 217h1M26 217h2M29 217h2M33 217h1M2 219h1M5 219h1M7 219h2M11 219h1M13 219h1M16 219h2M20 219h1M7 221h1M38 223h1M15 225h1M18 225h2M21 225h1M23 225h1M25 225h1M28 225h2M32 225h1M34 225h2M37 225h1M39 225h2M42 225h2M46 225h1M28 235h1M2 237h1M5 237h1M7 237h2M11 237h1M13 237h1M16 237h2M20 237h1M22 237h2M25 237h1M27 237h2M30 237h2M23 245h2M26 245h3M30 245h4M3 259h2M6 259h3M12 259h10M23 259h5M33 259h1M35 259h1M37 259h1M39 259h2M42 259h3M47 259h1M49 259h1M14 261h1M17 261h2M20 261h1M22 261h1M24 261h1M27 261h2M31 261h1M2 263h1M5 263h2M8 263h1M10 263h1M12 263h1M15 263h2M19 263h1M21 263h2M24 263h1M26 263h2M29 263h2M2 267h1M6 267h2M10 267h1M45 283h5M51 283h2M54 283h5M45 289h5M51 289h2M54 289h5M25 305h1M31 305h2M34 305h3M38 305h6M48 305h1M51 305h2M0 307h1M3 307h2M6 307h1M8 307h1M10 307h1M13 307h2M17 307h1M19 307h6M28 307h1M30 307h2M34 307h6M8 309h1M11 309h2M14 309h1M16 309h1M18 309h1M21 309h2M25 309h1M27 309h3M1 311h2M4 311h3M8 311h4M13 311h3M19 311h1M25 311h7M10 313h1M21 313h4M26 313h3M31 313h2M34 313h1M36 313h3M21 315h1M26 315h3M30 315h1M32 315h7M44 315h1M46 315h2M0 317h3M15 319h1M31 319h1M16 329h1M22 329h4M27 329h1M30 329h1M32 329h2M35 329h2M51 329h1M0 337h4M5 337h3M10 337h2M13 337h1M15 337h3" stroke="#D4D4D4" stroke-width="1.15" opacity="0.42" fill="none"/>
<path d="M48 9h1M4 11h1M8 23h2M14 23h1M31 27h2M48 27h1M6 29h2M20 31h1M23 31h1M21 33h1M24 33h1M34 33h1M42 33h1M4 35h2M5 37h1M14 45h1M16 45h1M19 45h1M16 47h1M18 47h1M21 47h1M36 51h1M38 51h2M52 51h1M7 53h1M25 53h1M40 55h1M47 55h3M52 55h2M13 57h1M23 57h1M29 57h1M31 57h2M4 59h1M14 59h1M17 59h3M22 59h2M5 61h1M32 69h1M14 71h1M16 71h1M19 71h1M16 73h1M18 73h1M21 73h1M36 77h1M38 77h2M52 77h1M7 79h1M13 79h1M17 79h4M22 79h2M28 81h1M32 81h4M37 81h2M43 81h3M48 81h2M13 83h1M23 83h1M29 83h1M31 83h2M4 85h1M14 85h1M17 85h3M22 85h2M5 87h1M9 95h1M17 95h1M4 97h1M8 97h1M10 97h1M14 97h1M18 97h1M20 97h1M5 99h2M8 99h1M10 99h1M14 99h2M17 99h1M19 99h1M7 101h2M10 101h1M12 101h1M18 101h2M21 101h1M23 101h1M4 103h1M6 103h1M9 103h4M14 103h2M18 103h4M23 103h1M27 103h1M29 103h1M32 103h4M37 103h2M41 103h4M46 103h1M4 105h1M6 105h5M12 105h2M16 105h4M21 105h1M25 105h1M27 105h5M33 105h2M37 105h4M42 105h1M12 133h1M28 133h1M32 133h2M42 133h1M0 135h1M3 135h1M12 135h1M18 141h2M22 141h1M25 141h1M30 141h2M34 141h1M39 141h1M42 141h1M44 141h2M48 141h1M51 141h3M25 151h2M31 151h1M34 151h1M35 155h1M37 155h1M39 155h1M42 155h1M27 159h2M31 159h1M34 159h1M21 175h2M25 175h1M24 177h2M28 177h1M23 187h2M27 187h1M3 189h2M7 189h1M9 189h1M12 189h1M14 189h3M18 189h1M21 189h1M23 189h2M30 191h3M34 191h1M37 191h2M40 191h3M48 191h2M52 191h1M14 197h1M17 197h1M21 197h3M29 197h2M32 197h1M35 197h2M38 197h3M46 197h1M2 201h1M4 201h1M36 203h2M40 203h1M42 203h1M45 203h1M47 203h3M51 203h1M54 203h1M3 215h2M7 215h1M9 215h1M11 215h1M13 215h2M17 215h2M20 215h2M25 215h2M29 215h1M35 215h1M38 215h1M42 215h1M49 215h3M3 217h2M7 217h1M9 217h1M11 217h1M13 217h2M17 217h2M20 217h1M23 217h1M25 217h1M28 217h1M31 217h2M34 217h1M3 219h2M6 219h1M9 219h2M12 219h1M14 219h2M18 219h2M16 225h2M20 225h1M22 225h1M24 225h1M26 225h2M30 225h2M33 225h1M36 225h1M38 225h1M41 225h1M44 225h2M47 225h1M3 237h2M6 237h1M9 237h2M12 237h1M14 237h2M18 237h2M21 237h1M24 237h1M26 237h1M29 237h1M22 245h1M25 245h1M29 245h1M2 259h1M5 259h1M9 259h3M28 259h1M30 259h2M34 259h1M38 259h1M45 259h2M48 259h1M15 261h2M19 261h1M21 261h1M23 261h1M25 261h2M29 261h2M3 263h2M7 263h1M9 263h1M11 263h1M13 263h2M17 263h2M20 263h1M23 263h1M25 263h1M28 263h1M3 267h3M8 267h2M53 283h1M53 289h1M30 305h1M33 305h1M37 305h1M44 305h4M49 305h2M1 307h2M5 307h1M7 307h1M9 307h1M11 307h2M15 307h2M18 307h1M25 307h3M29 307h1M32 307h2M9 309h2M13 309h1M15 309h1M17 309h1M19 309h2M23 309h2M26 309h1M0 311h1M3 311h1M7 311h1M12 311h1M16 311h3M20 311h1M24 311h1M32 311h2M25 313h1M29 313h2M33 313h1M35 313h1M39 313h2M29 315h1M31 315h1M39 315h5M45 315h1M48 315h1M3 317h2M21 329h1M26 329h1M28 329h2M31 329h1M34 329h1M37 329h3M4 337h1M8 337h2M12 337h1M14 337h1M18 337h2" stroke="#D4D4D4" stroke-width="1.15" opacity="0.56" fill="none"/>
<path d="M2 3h5M16 3h1M18 3h5M24 3h1M33 3h1M35 3h5M41 3h1M2 5h1M4 5h5M10 5h1M3 9h3M7 9h1M9 9h1M33 9h5M2 15h1M5 15h1M7 15h1M2 19h3M7 19h1M9 19h1M7 25h2M18 25h1M20 25h3M20 27h1M22 27h2M39 31h2M13 33h1M16 33h2M3 43h1M5 43h2M11 43h1M14 43h2M20 43h1M22 43h1M8 45h5M17 49h1M19 49h2M28 51h1M31 51h2M13 53h2M19 53h1M23 53h1M28 55h2M34 55h1M38 55h1M3 67h1M9 67h1M12 67h2M18 67h1M20 67h1M20 69h2M26 69h1M30 69h1M8 71h5M17 75h1M19 75h2M28 77h1M31 77h2M18 129h1M1 151h2M4 151h3M8 151h4M1 155h2M4 155h3M8 155h6M18 155h1M21 155h2M0 159h4M5 159h3M10 159h2M13 159h1M15 159h3M39 159h2M42 159h3M46 159h4M1 161h7M10 161h1M13 161h2M16 161h1M18 161h3M32 161h1M0 163h4M5 163h3M10 163h2M13 163h1M15 163h3M0 171h1M3 171h1M5 171h2M8 171h4M13 171h3M18 171h2M21 171h1M1 173h7M10 173h1M13 173h2M16 173h1M18 173h3M23 173h2M6 199h1M9 199h2M12 199h1M14 199h1M18 199h5M25 199h2M29 199h1M2 205h1M5 205h1M7 205h2M11 205h4M16 205h1M19 205h4M24 205h1M4 223h1M7 223h2M10 223h1M12 223h1M14 223h1M17 223h2M21 223h1M23 223h2M26 223h1M28 223h2M31 223h2M35 223h1M2 235h1M5 235h1M7 235h2M11 235h1M15 235h5M22 235h2M26 235h1M40 243h1M1 305h2M4 305h3M8 305h4M13 305h3M19 305h1M21 305h2M0 313h1M4 313h2M8 313h1M0 315h4M5 315h3M10 315h2M13 315h1M15 315h3M0 319h3M4 319h1M9 319h2M13 319h1M21 319h7M1 329h4M6 329h1M11 329h4M43 329h1M46 329h2M49 329h1" stroke="#DCDCAA" stroke-width="1.15" opacity="0.42" fill="none"/>
<path d="M7 3h1M17 3h1M23 3h1M34 3h1M40 3h1M3 5h1M9 5h1M2 9h1M6 9h1M8 9h1M38 9h1M3 15h2M6 15h1M8 15h1M5 19h2M8 19h1M10 19h1M4 25h3M15 25h3M16 27h3M21 27h1M13 31h3M36 31h3M14 33h2M18 33h1M2 43h1M4 43h1M7 43h4M12 43h2M16 43h4M21 43h1M18 49h1M29 51h2M33 51h1M15 53h4M20 53h3M30 55h4M35 55h3M2 67h1M4 67h5M10 67h2M14 67h4M19 67h1M22 69h4M27 69h3M18 75h1M29 77h2M33 77h1M17 129h1M0 151h1M3 151h1M7 151h1M0 155h1M3 155h1M7 155h1M14 155h4M19 155h2M4 159h1M8 159h2M12 159h1M14 159h1M18 159h2M38 159h1M41 159h1M45 159h1M0 161h1M8 161h2M11 161h2M15 161h1M17 161h1M21 161h2M29 161h3M4 163h1M8 163h2M12 163h1M14 163h1M18 163h2M1 171h2M4 171h1M7 171h1M12 171h1M16 171h2M20 171h1M0 173h1M8 173h2M11 173h2M15 173h1M17 173h1M21 173h2M7 199h2M11 199h1M13 199h1M15 199h3M23 199h2M27 199h2M3 205h2M6 205h1M9 205h2M15 205h1M17 205h2M23 205h1M5 223h2M9 223h1M11 223h1M13 223h1M15 223h2M19 223h2M22 223h1M25 223h1M27 223h1M30 223h1M33 223h2M36 223h1M3 235h2M6 235h1M9 235h2M12 235h3M20 235h2M24 235h2M39 243h1M0 305h1M3 305h1M7 305h1M12 305h1M16 305h3M20 305h1M23 305h1M1 313h3M6 313h2M4 315h1M8 315h2M12 315h1M14 315h1M18 315h2M3 319h1M5 319h4M11 319h2M20 319h1M28 319h2M0 329h1M5 329h1M7 329h4M44 329h2M48 329h1" stroke="#DCDCAA" stroke-width="1.15" opacity="0.56" fill="none"/>
<path d="M20 9h2M28 9h2M31 9h1M16 11h2M24 121h2M18 127h2M25 129h2M36 129h2M22 137h2M28 139h2M6 195h2M9 197h2M12 197h1M4 221h2M5 225h2M45 243h2M56 243h2M38 295h2M27 327h2" stroke="#C586C0" stroke-width="1.15" opacity="0.42" fill="none"/>
<path d="M30 9h1M15 11h1M18 11h1M11 197h1M4 225h1M7 225h1" stroke="#C586C0" stroke-width="1.15" opacity="0.56" fill="none"/>
<path d="M31 117h1M21 123h1M21 129h1M19 137h1M26 137h1M24 139h1M32 139h1M19 151h1M18 177h1M10 245h1M15 245h1M13 277h1M27 279h1M34 295h1M42 295h1M16 313h1M23 327h1M31 327h1" stroke="#B5CEA8" stroke-width="1.15" opacity="0.26" fill="none"/>
<path d="M55 9h1M22 15h1M33 15h1M22 49h1M47 51h1M22 75h1M47 77h1M29 117h2M32 117h1M20 121h1M27 121h1M19 123h1M22 123h1M14 127h1M21 127h1M22 129h1M28 129h1M33 129h1M39 129h1M20 137h1M27 137h1M26 139h1M34 139h1M18 151h1M20 151h1M19 177h1M29 183h1M11 221h1M42 243h1M48 243h1M53 243h1M2 245h1M11 245h1M16 245h1M14 277h1M26 279h1M28 279h1M4 285h1M6 285h2M11 285h1M13 285h1M4 291h1M6 291h2M11 291h1M13 291h1M36 295h1M44 295h1M15 313h1M17 313h1M25 327h1M32 327h1" stroke="#B5CEA8" stroke-width="1.15" opacity="0.42" fill="none"/>
<path d="M20 11h1M25 27h1M28 33h1M33 117h1M21 121h2M28 121h2M20 123h1M23 123h1M15 127h2M22 127h2M20 129h1M23 129h1M29 129h2M34 129h1M40 129h2M18 137h1M25 137h1M23 139h1M25 139h1M31 139h1M33 139h1M17 177h1M30 183h2M55 191h1M2 193h1M11 225h1M43 243h1M49 243h2M54 243h1M3 245h3M9 245h1M14 245h1M12 277h1M1 285h1M5 285h1M12 285h1M14 285h1M1 291h1M5 291h1M12 291h1M14 291h1M33 295h1M35 295h1M41 295h1M43 295h1M22 327h1M24 327h1M30 327h1" stroke="#B5CEA8" stroke-width="1.15" opacity="0.56" fill="none"/>
<path d="M8 51h1M11 51h1M15 51h1M19 51h1M8 55h1M11 55h1M15 55h1M8 77h1M11 77h1M15 77h1M19 77h1M8 81h1M11 81h1M15 81h1M11 117h1M19 117h1M9 121h1M4 123h1M8 123h1M3 127h1M5 129h1M7 133h1M8 137h1M7 139h1M14 139h1M7 141h1" stroke="#9CDCFE" stroke-width="1.15" opacity="0.26" fill="none"/>
<path d="M0 1h5M9 3h1M11 3h1M11 9h1M13 9h1M10 15h1M12 15h1M12 19h3M18 19h2M24 19h1M29 19h5M4 23h1M10 25h1M4 27h3M8 27h2M11 27h2M4 31h1M6 31h2M9 31h1M4 33h1M6 33h4M25 43h3M31 43h1M33 43h2M36 43h2M4 45h1M4 47h1M8 47h2M12 47h1M4 49h1M6 49h1M9 49h5M5 51h3M9 51h2M12 51h2M16 51h3M21 51h1M24 51h1M5 55h3M9 55h2M12 55h2M16 55h1M20 55h2M24 55h1M4 57h1M6 57h4M23 67h3M29 67h1M31 67h2M34 67h2M5 69h3M12 69h1M15 69h2M4 71h1M4 73h1M8 73h2M12 73h1M4 75h1M6 75h1M9 75h5M5 77h3M9 77h2M12 77h2M16 77h3M21 77h1M24 77h1M5 81h3M9 81h2M12 81h2M16 81h1M20 81h2M24 81h1M4 83h1M6 83h4M0 117h5M6 117h1M9 117h2M12 117h6M20 117h3M25 117h1M1 121h8M10 121h6M0 123h3M7 123h1M9 123h6M2 127h1M4 127h6M1 129h2M4 129h1M6 129h6M13 129h1M0 133h1M3 133h2M6 133h1M0 137h2M3 137h5M9 137h2M12 137h2M0 139h1M3 139h2M6 139h1M8 139h2M11 139h2M15 139h2M18 139h1M0 141h1M3 141h2M6 141h1M8 141h2M11 141h2M2 175h2M5 175h4M10 175h1M13 175h2M16 175h1M2 177h1M5 177h1M7 177h2M12 177h1M2 183h1M5 183h2M8 183h1M10 183h1M14 183h5M21 183h2M25 183h1M2 187h1M5 187h1M7 187h2M13 187h5M2 191h1M5 191h1M7 191h2M11 191h1M15 191h5M22 191h2M26 191h1M2 203h1M5 203h2M8 203h1M10 203h1M12 203h1M15 203h2M19 203h1M22 203h3M27 203h2M30 203h2M2 213h1M5 213h2M8 213h1M10 213h1M12 213h1M15 213h2M19 213h1M21 213h2M24 213h1M26 213h2M29 213h2M33 213h1M2 233h1M5 233h1M7 233h2M11 233h4M16 233h1M19 233h1M2 243h1M5 243h2M8 243h1M10 243h1M12 243h1M15 243h2M19 243h1M21 243h2M24 243h1M26 243h2M31 243h1M33 243h2M2 261h1M6 261h2M10 261h1M2 277h1M6 277h1M8 277h1M1 279h2M4 279h3M8 279h6M18 279h1M21 279h2M0 283h1M3 283h2M6 283h1M8 283h1M10 283h1M13 283h2M17 283h1M19 283h6M28 283h1M30 283h2M34 283h6M0 289h1M3 289h2M6 289h1M8 289h1M10 289h1M13 289h2M17 289h1M19 289h6M28 289h1M30 289h2M34 289h6M0 295h1M3 295h2M6 295h1M8 295h1M10 295h1M13 295h2M17 295h1M19 295h3M25 295h1M27 295h2M0 309h3M4 309h1M1 327h4M6 327h1M9 327h1M11 327h2M14 327h2" stroke="#9CDCFE" stroke-width="1.15" opacity="0.42" fill="none"/>
<path d="M15 9h1M17 19h1M22 19h2M27 19h2M7 27h1M10 27h1M5 31h1M8 31h1M5 33h1M24 43h1M30 43h1M32 43h1M35 43h1M5 47h3M10 47h2M5 49h1M7 49h2M4 51h1M14 51h1M20 51h1M22 51h2M4 55h1M14 55h1M17 55h3M22 55h2M5 57h1M22 67h1M28 67h1M30 67h1M33 67h1M4 69h1M8 69h4M13 69h2M5 73h3M10 73h2M5 75h1M7 75h2M4 77h1M14 77h1M20 77h1M22 77h2M4 81h1M14 81h1M17 81h3M22 81h2M5 83h1M5 117h1M7 117h2M18 117h1M23 117h2M0 121h1M16 121h1M3 123h1M5 123h2M15 123h1M0 127h2M10 127h1M0 129h1M3 129h1M12 129h1M1 133h2M5 133h1M8 133h1M2 137h1M11 137h1M14 137h1M1 139h2M5 139h1M10 139h1M13 139h1M17 139h1M19 139h1M1 141h2M5 141h1M10 141h1M13 141h1M4 175h1M9 175h1M11 175h2M15 175h1M3 177h2M6 177h1M9 177h3M13 177h1M3 183h2M7 183h1M9 183h1M11 183h3M19 183h2M23 183h2M3 187h2M6 187h1M9 187h4M18 187h1M3 191h2M6 191h1M9 191h2M12 191h3M20 191h2M24 191h2M3 203h2M7 203h1M9 203h1M11 203h1M13 203h2M17 203h2M20 203h2M25 203h2M29 203h1M3 213h2M7 213h1M9 213h1M11 213h1M13 213h2M17 213h2M20 213h1M23 213h1M25 213h1M28 213h1M31 213h2M34 213h1M3 233h2M6 233h1M9 233h2M15 233h1M17 233h2M3 243h2M7 243h1M9 243h1M11 243h1M13 243h2M17 243h2M20 243h1M23 243h1M25 243h1M28 243h3M32 243h1M35 243h1M3 261h3M8 261h2M0 277h2M3 277h3M7 277h1M0 279h1M3 279h1M7 279h1M14 279h4M19 279h2M1 283h2M5 283h1M7 283h1M9 283h1M11 283h2M15 283h2M18 283h1M25 283h3M29 283h1M32 283h2M40 283h2M1 289h2M5 289h1M7 289h1M9 289h1M11 289h2M15 289h2M18 289h1M25 289h3M29 289h1M32 289h2M40 289h2M1 295h2M5 295h1M7 295h1M9 295h1M11 295h2M15 295h2M18 295h1M22 295h3M26 295h1M29 295h1M3 309h1M0 327h1M5 327h1M7 327h2M10 327h1M13 327h1M16 327h3" stroke="#9CDCFE" stroke-width="1.15" opacity="0.56" fill="none"/>
</svg>
<div id="ruler"></div>
<div class="abs" style="left:946px;top:131.6px;width:19.2px;height:2.6px;background:#a0a0a0"></div>
<div class="abs" style="left:952.2px;top:131px;width:6.6px;height:7.8px;background:#aeafad"></div>
<div id="sep"></div>
<div id="tabs2"><div id="tab2"></div></div>
<div class="tablabel" style="left:1011px;top:9.2px;color:#8f8f8f;letter-spacing:.12px">Preview ea-capital.squiggle</div>
<div id="web"></div>
<div id="pills"></div><div id="pill1"></div>
<svg class="abs" style="left:996.8px;top:81.4px" width="23.04" height="23.04" viewBox="0 0 20 20" fill="#64748b"><path d="M10 12a2 2 0 100-4 2 2 0 000 4z"/><path fill-rule="evenodd" clip-rule="evenodd" d="M.458 10C1.732 5.943 5.522 3 10 3s8.268 2.943 9.542 7c-1.274 4.057-5.064 7-9.542 7S1.732 14.057.458 10zM14 10a4 4 0 11-8 0 4 4 0 018 0z"/></svg><svg class="abs" style="left:1131.2px;top:81.3px" width="23.04" height="23.04" viewBox="0 0 20 20" fill="#9ca3af"><path fill-rule="evenodd" clip-rule="evenodd" d="M11.49 3.17c-.38-1.56-2.6-1.56-2.98 0a1.532 1.532 0 01-2.286.948c-1.372-.836-2.942.734-2.106 2.106.54.886.061 2.042-.947 2.287-1.561.379-1.561 2.6 0 2.978a1.532 1.532 0 01.947 2.287c-.836 1.372.734 2.942 2.106 2.106a1.532 1.532 0 012.287.947c.379 1.561 2.6 1.561 2.978 0a1.533 1.533 0 012.287-.947c1.372.836 2.942-.734 2.106-2.106a1.533 1.533 0 01.947-2.287c1.561-.379 1.561-2.6 0-2.978a1.532 1.532 0 01-.947-2.287c.836-1.372-.734-2.942-2.106-2.106a1.532 1.532 0 01-2.287-.947zM10 13a3 3 0 100-6 3 3 0 000 6z"/></svg><svg class="abs" style="left:1365.8px;top:81.3px" width="23.04" height="23.04" viewBox="0 0 20 20" fill="#9ca3af"><path fill-rule="evenodd" clip-rule="evenodd" d="M5 3a2 2 0 00-2 2v10a2 2 0 002 2h10a2 2 0 002-2V5a2 2 0 00-2-2H5zm9 4a1 1 0 10-2 0v6a1 1 0 102 0V7zm-3 2a1 1 0 10-2 0v4a1 1 0 102 0V9zm-3 3a1 1 0 10-2 0v1a1 1 0 102 0v-1z"/></svg><svg class="abs" style="left:1560.8px;top:81.3px" width="23.04" height="23.04" viewBox="0 0 20 20" fill="#9ca3af"><path d="M8.433 7.418c.155-.103.346-.196.567-.267v1.698a2.305 2.305 0 01-.567-.267C8.07 8.34 8 8.114 8 8c0-.114.07-.34.433-.582zM11 12.849v-1.698c.22.071.412.164.567.267.364.243.433.468.433.582 0 .114-.07.34-.433.582a2.305 2.305 0 01-.567.267z"/><path fill-rule="evenodd" clip-rule="evenodd" d="M10 18a8 8 0 100-16 8 8 0 000 16zm1-13a1 1 0 10-2 0v.092a4.535 4.535 0 00-1.676.662C6.602 6.234 6 7.009 6 8c0 .99.602 1.765 1.324 2.246.48.32 1.054.545 1.676.662v1.941c-.391-.127-.68-.317-.843-.504a1 1 0 10-1.51 1.31c.562.649 1.413 1.076 2.353 1.253V15a1 1 0 102 0v-.092a4.535 4.535 0 001.676-.662C13.398 13.766 14 12.991 14 12c0-.99-.602-1.765-1.324-2.246A4.535 4.535 0 0011 9.092V7.151c.391.127.68.317.843.504a1 1 0 101.511-1.31c-.563-.649-1.413-1.076-2.354-1.253V5z"/></svg>
<div class="pl" style="left:1031.6px;color:#0f172a;-webkit-text-stroke-color:#0f172a;letter-spacing:.2px">Display</div>
<div class="pl" style="left:1165.6px;letter-spacing:.355px">Sampling Settings</div>
<div class="pl" style="left:1400.8px;letter-spacing:.5px">View Settings</div>
<div class="pl" style="left:1596px;letter-spacing:.55px">Input Variables</div>
<div id="banner"></div>
<div id="fn">function(t)</div>
<svg class="chart" width="954" height="300" viewBox="966 180 954 300" style="position:absolute;left:966px;top:180px">
<path d="M1036.2,205.4V421.2H1756.5" fill="none" stroke="#f0f1f4" stroke-width="1.6"/>
<path d="M1035.8,335.0C1059.8,335.8 1083.8,337.3 1107.8,337.3C1131.8,337.3 1155.8,336.0 1179.8,334.8C1227.8,332.4 1275.8,323.8 1323.8,317.0C1371.8,310.2 1419.8,302.7 1467.8,293.5C1515.8,284.3 1563.8,272.7 1611.8,260.0C1659.8,247.3 1707.8,230.3 1755.8,215.5L1755.8,402.2C1707.8,401.0 1659.8,400.0 1611.8,398.7C1563.8,397.4 1515.8,396.0 1467.8,394.1C1419.8,392.2 1371.8,389.0 1323.8,386.3C1275.8,383.6 1227.8,379.6 1179.8,377.6C1155.8,376.6 1131.8,376.0 1107.8,375.2C1083.8,374.4 1059.8,373.7 1035.8,373.0Z" fill="#4C78A8" fill-opacity="0.05"/>
<path d="M1035.8,345.7C1059.8,345.3 1083.8,345.1 1107.8,344.6C1131.8,344.1 1155.8,343.2 1179.8,342.1C1227.8,339.9 1275.8,335.6 1323.8,331.3C1371.8,327.0 1419.8,321.0 1467.8,315.4C1515.8,309.8 1563.8,304.1 1611.8,297.6C1659.8,291.1 1707.8,283.1 1755.8,275.8L1755.8,394.1C1707.8,392.8 1659.8,391.5 1611.8,390.1C1563.8,388.7 1515.8,387.4 1467.8,385.6C1419.8,383.8 1371.8,381.1 1323.8,379.0C1275.8,376.9 1227.8,374.4 1179.8,372.9C1155.8,372.1 1131.8,371.6 1107.8,371.0C1083.8,370.4 1059.8,369.7 1035.8,369.0Z" fill="#4C78A8" fill-opacity="0.1"/>
<path d="M1035.8,349.0C1059.8,348.7 1083.8,348.5 1107.8,348.2C1131.8,347.9 1155.8,347.4 1179.8,346.8C1227.8,345.6 1275.8,343.2 1323.8,340.8C1371.8,338.4 1419.8,334.9 1467.8,331.8C1515.8,328.7 1563.8,325.6 1611.8,322.1C1659.8,318.6 1707.8,314.4 1755.8,310.5L1755.8,389.9C1707.8,388.4 1659.8,386.7 1611.8,385.3C1563.8,383.9 1515.8,382.9 1467.8,381.3C1419.8,379.7 1371.8,377.2 1323.8,375.3C1275.8,373.4 1227.8,371.4 1179.8,369.9C1155.8,369.2 1131.8,368.6 1107.8,368.0C1083.8,367.4 1059.8,366.7 1035.8,366.0Z" fill="#4C78A8" fill-opacity="0.15"/>
<path d="M1035.8,352.0C1059.8,351.9 1083.8,351.7 1107.8,351.6C1131.8,351.5 1155.8,351.3 1179.8,351.1C1227.8,350.7 1275.8,350.1 1323.8,349.1C1371.8,348.1 1419.8,345.9 1467.8,343.9C1515.8,341.9 1563.8,339.3 1611.8,337.0C1659.8,334.7 1707.8,332.3 1755.8,330.0L1755.8,382.9C1707.8,381.9 1659.8,381.0 1611.8,379.9C1563.8,378.8 1515.8,377.7 1467.8,376.3C1419.8,374.9 1371.8,372.7 1323.8,371.1C1275.8,369.5 1227.8,367.7 1179.8,366.5C1155.8,365.9 1131.8,365.4 1107.8,364.9C1083.8,364.4 1059.8,363.8 1035.8,363.2Z" fill="#4C78A8" fill-opacity="0.2"/>
<path d="M1035.8,353.7C1059.8,353.8 1083.8,353.8 1107.8,353.9C1131.8,354.0 1155.8,354.1 1179.8,354.1C1227.8,354.1 1275.8,353.9 1323.8,353.6C1371.8,353.3 1419.8,352.1 1467.8,351.3C1515.8,350.5 1563.8,349.9 1611.8,349.0C1659.8,348.1 1707.8,346.9 1755.8,345.8L1755.8,377.0C1707.8,376.2 1659.8,375.6 1611.8,374.7C1563.8,373.8 1515.8,372.5 1467.8,371.3C1419.8,370.1 1371.8,368.5 1323.8,367.4C1275.8,366.3 1227.8,365.4 1179.8,364.4C1155.8,363.9 1131.8,363.5 1107.8,363.0C1083.8,362.5 1059.8,362.0 1035.8,361.5Z" fill="#4C78A8" fill-opacity="0.2"/>
<path d="M1035.8,355.3C1059.8,355.5 1083.8,355.8 1107.8,356.0C1131.8,356.2 1155.8,356.6 1179.8,356.7C1227.8,357.0 1275.8,357.1 1323.8,357.2C1371.8,357.3 1419.8,357.4 1467.8,357.6C1515.8,357.8 1563.8,358.1 1611.8,358.2C1659.8,358.3 1707.8,358.3 1755.8,358.4L1755.8,370.6C1707.8,369.9 1659.8,369.2 1611.8,368.4C1563.8,367.6 1515.8,366.6 1467.8,365.8C1419.8,365.0 1371.8,364.3 1323.8,363.6C1275.8,362.9 1227.8,362.4 1179.8,361.8C1155.8,361.5 1131.8,361.3 1107.8,361.0C1083.8,360.7 1059.8,360.3 1035.8,360.0Z" fill="#4C78A8" fill-opacity="0.2"/>
<path d="M1035.8,357.7C1059.8,358.0 1083.8,358.3 1107.8,358.6C1131.8,358.9 1155.8,359.2 1179.8,359.4C1227.8,359.9 1275.8,360.2 1323.8,360.6C1371.8,361.0 1419.8,361.5 1467.8,362.0C1515.8,362.5 1563.8,363.2 1611.8,363.7C1659.8,364.2 1707.8,364.5 1755.8,364.9" fill="none" stroke="#4C78A8" stroke-width="2.88"/>
<g font-family="'Liberation Sans', Arial, sans-serif" font-size="14.4" fill="#727d93">
<text x="1025.6" y="209.2" text-anchor="end">200G</text>
<text x="1025.6" y="259.2" text-anchor="end">150G</text>
<text x="1025.6" y="308.2" text-anchor="end">100G</text>
<text x="1025.6" y="357.2" text-anchor="end">50G</text>
<text x="1025.6" y="406.2" text-anchor="end">0</text>
<text x="1036" y="443.3" text-anchor="middle">0</text>
<text x="1180" y="443.3" text-anchor="middle">2</text>
<text x="1324" y="443.3" text-anchor="middle">4</text>
<text x="1468" y="443.3" text-anchor="middle">6</text>
<text x="1612" y="443.3" text-anchor="middle">8</text>
<text x="1756" y="443.3" text-anchor="middle">10</text>
</g></svg>
<svg class="abs" style="left:0;top:0;z-index:5" width="1920" height="100" viewBox="0 0 1920 100"><g fill="#d4d7d6" opacity="1"><rect x="94.0" y="14.15" width="13" height="1.95"/><rect x="94.0" y="18.00" width="8" height="1.95"/><rect x="94.0" y="21.90" width="13" height="1.95"/><rect x="94.0" y="25.35" width="10" height="1.95"/></g><path d="M288.6,15.6L300.4,27.4M300.4,15.6L288.6,27.4" stroke="#ffffff" stroke-width="1.4" fill="none"/><path d="M183.3,55.3L190.5,62.2L183.3,69.1" fill="none" stroke="#a9a9a9" stroke-width="1.5"/><g fill="#d4d7d6" opacity="0.92"><rect x="208.3" y="54.60" width="13" height="1.95"/><rect x="208.3" y="58.45" width="8" height="1.95"/><rect x="208.3" y="62.35" width="13" height="1.95"/><rect x="208.3" y="65.80" width="10" height="1.95"/></g><path fill="none" stroke="#c5c5c5" stroke-width="1.35" d="M857.1,12.4V29M866,19.6V13.9a1.5,1.5 0 0 0 -1.5,-1.5H850.4a1.5,1.5 0 0 0 -1.5,1.5V27.5a1.5,1.5 0 0 0 1.5,1.5H857.8"/><circle fill="none" stroke="#c5c5c5" stroke-width="1.35" cx="865" cy="25.2" r="2.9"/><path fill="none" stroke="#c5c5c5" stroke-width="1.35" d="M862.9,27.4L859.2,30.9"/><circle cx="859.1" cy="21.3" r="19.9" fill="none" stroke="#00e8e8" stroke-width="2.3"/><path d="M778.6,87.4L826,50.6" fill="none" stroke="#00e8e8" stroke-width="2.6"/><path d="M841.2,38L819.4,45.9L828.5,57.1Z" fill="#00e8e8"/><rect fill="none" stroke="#c5c5c5" stroke-width="1.35" x="886.3" y="12.4" width="17.4" height="16.6" rx="1.5"/><path fill="none" stroke="#c5c5c5" stroke-width="1.35" d="M895,12.4V29"/><g fill="#c5c5c5"><circle cx="924.6" cy="21.5" r="1.55"/><circle cx="931.8" cy="21.5" r="1.55"/><circle cx="938.9" cy="21.5" r="1.55"/></g><g fill="#d4d7d6" opacity="0.85"><rect x="989.8" y="14.90" width="13" height="1.95"/><rect x="989.8" y="18.75" width="8" height="1.95"/><rect x="989.8" y="22.65" width="13" height="1.95"/><rect x="989.8" y="26.10" width="10" height="1.95"/></g><path d="M1256.6000000000001,15.500000000000002L1268.8,27.700000000000003M1268.8,15.500000000000002L1256.6000000000001,27.700000000000003" stroke="#8f8f8f" stroke-width="1.4" fill="none"/><g fill="#c5c5c5"><circle cx="1879.5" cy="21.5" r="1.55"/><circle cx="1886.7" cy="21.5" r="1.55"/><circle cx="1893.9" cy="21.5" r="1.55"/></g></svg>
<div id="redge"></div>
<div id="status"></div><div id="botline"></div>
<div class="st" style="left:47px;letter-spacing:.12px">master</div>
<div class="st" style="left:191px">0</div>
<div class="st" style="left:228.8px">0</div>
<div class="st" style="left:1460px;letter-spacing:-.22px">Ln 11, Col 28</div>
<div class="st" style="left:1582.6px;letter-spacing:-.66px">Spaces: 2</div>
<div class="st" style="left:1677.6px;letter-spacing:-.84px">UTF-8</div>
<div class="st" style="left:1746.6px;letter-spacing:-1.6px">LF</div>
<div class="st" style="left:1787.4px">Squiggle</div>
<svg class="abs" style="left:0;top:1000px;z-index:6" width="1920" height="51" viewBox="0 1000 1920 51"><circle fill="none" stroke="#ffffff" stroke-width="1.38" cx="27.4" cy="1027" r="2.5"/><circle fill="none" stroke="#ffffff" stroke-width="1.38" cx="27.4" cy="1041" r="2.5"/><circle fill="none" stroke="#ffffff" stroke-width="1.38" cx="36" cy="1030.6" r="2.5"/><path fill="none" stroke="#ffffff" stroke-width="1.38" d="M27.4,1029.5V1038.5M36,1033.1C36,1035.6 34,1036.2 32,1036.2H31C28.8,1036.2 27.4,1037 27.4,1038.5"/><path fill="none" stroke="#ffffff" stroke-width="1.38" d="M130.8,1038.4H129.6C127.3,1038.4 125.7,1037 125.7,1035.1C125.7,1033.2 127.1,1031.9 129,1031.8C129.6,1029.8 131.6,1028.5 134.2,1028.5C136.8,1028.5 138.8,1029.8 139.4,1031.8C141.3,1031.9 142.6,1033.2 142.6,1035.1C142.6,1037 141.2,1038.4 139,1038.4H137.8"/><path fill="none" stroke="#ffffff" stroke-width="1.38" d="M134.3,1041.8V1033.8M131.1,1036.7L134.3,1033.6L137.5,1036.7"/><circle fill="none" stroke="#ffffff" stroke-width="1.38" cx="176.4" cy="1034" r="8"/><path fill="none" stroke="#ffffff" stroke-width="1.38" d="M172.8,1030.4L180,1037.6M180,1030.4L172.8,1037.6"/><path fill="none" stroke="#ffffff" stroke-width="1.38" stroke-linejoin="round" d="M214.9,1025.4L223.1,1040.4H206.7Z"/><path fill="none" stroke="#ffffff" stroke-width="1.38" d="M214.9,1030.6V1035.8M214.9,1037V1038.6"/><path fill="none" stroke="#ffffff" stroke-width="1.38" stroke-width="1.35" stroke-linejoin="round" d="M1880.9,1039.3H1895.3L1894,1036.4V1031.8C1894,1028.2 1891.4,1025.7 1888.1,1025.7C1884.8,1025.7 1882.2,1028.2 1882.2,1031.8V1036.4Z"/><path fill="none" stroke="#ffffff" stroke-width="1.38" stroke-width="1.35" d="M1886,1039.6C1886,1041.2 1886.9,1042 1888.1,1042C1889.3,1042 1890.2,1041.2 1890.2,1039.6"/></svg>

</body></html>
